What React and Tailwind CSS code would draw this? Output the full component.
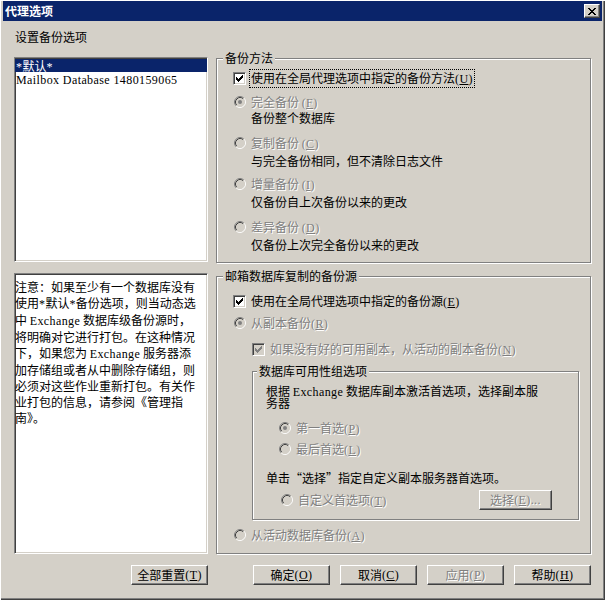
import React from "react";

// Windows classic dialog: 代理选项

const dis = "text-[#808080] [text-shadow:1px_1px_0_#fff]";

// half-width (SimSun-like) latin run
const A = ({ children }) => (
  <span className="[font-family:'Liberation_Serif',serif] tracking-[0.4px]">{children}</span>
);

const Key = ({ k }) => (
  <A>
    (<u className="underline-offset-[1px]">{k}</u>)
  </A>
);

const CHECK_COLS = [
  [0, 2],
  [1, 3],
  [2, 4],
  [3, 3],
  [4, 2],
  [5, 1],
  [6, 0],
];

function Check({ checked, disabled }) {
  return (
    <span
      className={`w-[13px] h-[13px] shrink-0 flex items-center justify-center border border-t-[#808080] border-l-[#808080] border-r-white border-b-white shadow-[inset_1px_1px_0_#404040,inset_-1px_-1px_0_#d4d0c8] ${
        disabled ? "bg-[#d4d0c8]" : "bg-white"
      }`}
    >
      {checked && (
        <svg width="7" height="7" viewBox="0 0 7 7">
          {CHECK_COLS.map(([x, y]) => (
            <rect key={x} x={x} y={y} width="1" height="3" fill={disabled ? "#808080" : "#000"} />
          ))}
        </svg>
      )}
    </span>
  );
}

function Radio({ checked, disabled }) {
  return (
    <svg width="12" height="12" viewBox="0 0 12 12" className="shrink-0">
      <path d="M2.11 9.89A5.5 5.5 0 0 1 9.89 2.11" stroke="#808080" fill="none" />
      <path d="M9.89 2.11A5.5 5.5 0 0 1 2.11 9.89" stroke="#fff" fill="none" />
      <circle cx="6" cy="6" r="4" fill={disabled ? "#d4d0c8" : "#fff"} />
      <path d="M2.82 9.18A4.5 4.5 0 0 1 9.18 2.82" stroke="#404040" fill="none" />
      <path d="M9.18 2.82A4.5 4.5 0 0 1 2.82 9.18" stroke="#d4d0c8" fill="none" />
      {checked && <circle cx="6" cy="6" r="2" fill={disabled ? "#808080" : "#000"} />}
    </svg>
  );
}

function CheckRow({ checked, disabled, focus, className = "", children }) {
  return (
    <div className={`flex items-center h-[14px] gap-[5px] ${className}`}>
      <Check checked={checked} disabled={disabled} />
      <span
        className={`whitespace-nowrap ${disabled ? dis : ""} ${
          focus ? "outline-1 outline-dotted outline-black outline-offset-[1px]" : ""
        }`}
      >
        {children}
      </span>
    </div>
  );
}

function RadioRow({ checked, disabled, className = "", children }) {
  return (
    <div className={`flex items-center h-[14px] gap-[5px] ${className}`}>
      <Radio checked={checked} disabled={disabled} />
      <span className={`whitespace-nowrap ${disabled ? dis : ""}`}>{children}</span>
    </div>
  );
}

function Btn({ disabled, className = "w-[77px] h-[20px]", children }) {
  return (
    <button
      type="button"
      className={`${className} shrink-0 bg-[#d4d0c8] flex items-center justify-center leading-[14px] whitespace-nowrap border border-t-white border-l-white border-r-[#404040] border-b-[#404040] shadow-[inset_-1px_-1px_0_#808080] ${
        disabled ? dis : "text-black"
      }`}
    >
      {children}
    </button>
  );
}

function Group({ label, labelLeft = "left-[6px]", className = "", children }) {
  return (
    <div className={`relative border border-[#808080] shadow-[inset_1px_1px_0_#fff,1px_1px_0_#fff] ${className}`}>
      <span className={`absolute -top-[8px] ${labelLeft} px-[2px] bg-[#d4d0c8] leading-[14px] whitespace-nowrap`}>
        {label}
      </span>
      {children}
    </div>
  );
}

const sunken =
  "border border-t-[#808080] border-l-[#808080] border-r-white border-b-white shadow-[inset_1px_1px_0_#404040,inset_-1px_-1px_0_#d4d0c8] bg-white";

const X_ROWS = [
  [0, 1, 6, 7],
  [1, 2, 5, 6],
  [2, 3, 4, 5],
  [3, 4],
  [2, 3, 4, 5],
  [1, 2, 5, 6],
  [0, 1, 6, 7],
];

function TitleBar() {
  return (
    <div className="h-[20px] bg-[#0a246a] flex items-center justify-between pl-[2px] pr-[2px]">
      <span className="text-white font-bold leading-[14px]">代理选项</span>
      <button
        type="button"
        className="w-[16px] h-[14px] bg-[#d4d0c8] flex items-center justify-center border border-t-white border-l-white border-r-[#404040] border-b-[#404040] shadow-[inset_-1px_-1px_0_#808080]"
      >
        <svg width="8" height="7" viewBox="0 0 8 7">
          {X_ROWS.map((row, y) =>
            row.map((x) => <rect key={`${x}-${y}`} x={x} y={y} width="1" height="1" fill="#000" />)
          )}
        </svg>
      </button>
    </div>
  );
}

export default function App() {
  return (
    <div className="w-[605px] h-[600px] bg-[#d4d0c8] flex flex-col pt-[1px] px-[3px] shadow-[inset_1px_1px_0_#fff,inset_-1px_-1px_0_#404040,inset_-2px_-2px_0_#808080] [font-family:'Noto_Sans_CJK_SC','Liberation_Sans',sans-serif] text-[12px] leading-[14px] text-black">
      <TitleBar />

      <div className="flex flex-col pl-[11px] pr-[11px]">
        <div className="mt-[9px] ml-[1px]">设置备份选项</div>

        {/* top row: database list + backup method */}
        <div className="mt-[13px] flex gap-[8px]">
          <div className={`w-[194px] h-[205px] shrink-0 ${sunken}`}>
            <div className="mt-[1px] h-[13px] leading-[13px] bg-[#0a246a] text-white pl-[1px]">
              <A>*</A>默认<A>*</A>
            </div>
            <div className="h-[13px] leading-[13px] pl-[1px]">
              <A>Mailbox Database 1480159065</A>
            </div>
          </div>

          <Group label="备份方法" className="flex-1 mt-[1px] h-[205px]">
            <div className="flex flex-col pt-[12px] pl-[16px]">
              <CheckRow checked focus>
                使用在全局代理选项中指定的备份方法<Key k="U" />
              </CheckRow>
              <RadioRow className="mt-[10px] pl-[1px]" checked disabled>
                完全备份 <Key k="F" />
              </RadioRow>
              <div className="mt-[2px] pl-[18px]">备份整个数据库</div>
              <RadioRow className="mt-[11px] pl-[1px]" disabled>
                复制备份 <Key k="C" />
              </RadioRow>
              <div className="mt-[4px] pl-[18px]">与完全备份相同，但不清除日志文件</div>
              <RadioRow className="mt-[9px] pl-[1px]" disabled>
                增量备份 <Key k="I" />
              </RadioRow>
              <div className="mt-[4px] pl-[18px]">仅备份自上次备份以来的更改</div>
              <RadioRow className="mt-[11px] pl-[1px]" disabled>
                差异备份 <Key k="D" />
              </RadioRow>
              <div className="mt-[4px] pl-[18px]">仅备份上次完全备份以来的更改</div>
            </div>
          </Group>
        </div>

        {/* bottom row: note + replication source */}
        <div className="mt-[10px] flex gap-[8px]">
          <div className={`w-[194px] h-[281px] shrink-0 pt-[5px] leading-[16px] whitespace-nowrap overflow-hidden ${sunken}`}>
            注意：如果至少有一个数据库没有
            <br />
            使用<A>*</A>默认<A>*</A>备份选项，则当动态选
            <br />中 <A>Exchange</A> 数据库级备份源时，
            <br />
            将明确对它进行打包。在这种情况
            <br />
            下，如果您为 <A>Exchange</A> 服务器添
            <br />
            加存储组或者从中删除存储组，则
            <br />
            必须对这些作业重新打包。有关作
            <br />
            业打包的信息，请参阅《管理指
            <br />
            南》。
          </div>

          <Group label="邮箱数据库复制的备份源" className="flex-1 mt-[3px] h-[278px]">
            <div className="flex flex-col pt-[17px] pl-[16px]">
              <CheckRow checked>
                使用在全局代理选项中指定的备份源<Key k="E" />
              </CheckRow>
              <RadioRow className="mt-[8px] pl-[1px]" checked disabled>
                从副本备份<Key k="R" />
              </RadioRow>
              <CheckRow className="mt-[12px] ml-[19px]" checked disabled>
                如果没有好的可用副本，从活动的副本备份<Key k="N" />
              </CheckRow>

              <Group
                label="数据库可用性组选项"
                labelLeft="left-[4px]"
                className="mt-[15px] ml-[19px] w-[327px] h-[149px]"
              >
                <div className="flex flex-col pt-[13px] pl-[13px] pr-[26px]">
                  <div className="h-[12px] leading-[12px] whitespace-nowrap">
                    根据 <A>Exchange</A> 数据库副本激活首选项，选择副本服
                  </div>
                  <div className="h-[12px] leading-[12px]">务器</div>
                  <RadioRow className="mt-[12px] ml-[13px]" checked disabled>
                    第一首选<Key k="P" />
                  </RadioRow>
                  <RadioRow className="mt-[7px] ml-[13px]" disabled>
                    最后首选<Key k="L" />
                  </RadioRow>
                  <div className="mt-[15px] whitespace-nowrap">单击“选择”指定自定义副本服务器首选项。</div>
                  <div className="mt-[5px] h-[20px] flex items-center">
                    <RadioRow className="ml-[15px]" disabled>
                      自定义首选项<Key k="T" />
                    </RadioRow>
                    <div className="ml-auto">
                      <Btn disabled className="w-[73px] h-[20px]">
                        选择<Key k="E" />
                        <A>...</A>
                      </Btn>
                    </div>
                  </div>
                </div>
              </Group>

              <RadioRow className="mt-[8px] pl-[1px]" disabled>
                从活动数据库备份<Key k="A" />
              </RadioRow>
            </div>
          </Group>
        </div>

        {/* buttons */}
        <div className="mt-[11px] flex">
          <div className="w-[195px] flex justify-end">
            <Btn>
              全部重置<Key k="T" />
            </Btn>
          </div>
          <div className="ml-[45px] flex gap-[10px]">
            <Btn>
              确定 <Key k="O" />
            </Btn>
            <Btn>
              取消 <Key k="C" />
            </Btn>
            <Btn disabled>
              应用 <Key k="P" />
            </Btn>
            <Btn>
              帮助 <Key k="H" />
            </Btn>
          </div>
        </div>
      </div>
    </div>
  );
}
